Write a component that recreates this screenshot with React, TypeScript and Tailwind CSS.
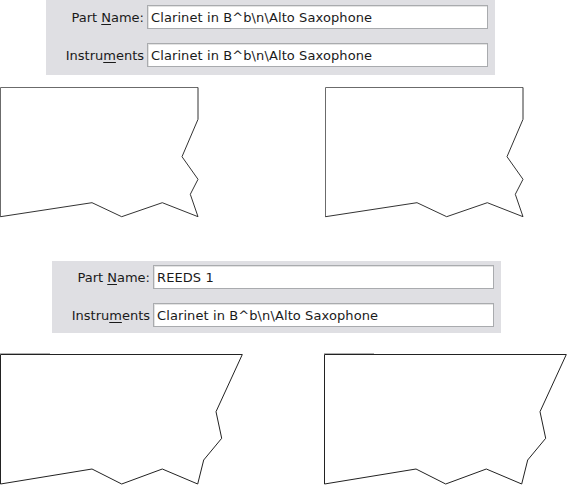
import React from "react";

const font = { fontFamily: '"DejaVu Sans", "Liberation Sans", sans-serif' };

function Field({ label, value }: { label: [string, string, string]; value: string }) {
  return (
    <div className="flex items-center h-[24px]">
      <div className="w-[101px] pr-[3px] text-right text-[13px] leading-none text-[#1a1a1a] whitespace-nowrap">
        {label[0]}
        <span className="underline underline-offset-2">{label[1]}</span>
        {label[2]}
      </div>
      <div className="w-[341px] h-[24px] bg-white border border-[#a9abae] shadow-[inset_1px_1px_0_#e3e3e3] flex items-center pl-[3px] text-[13px] tracking-[0.1px] leading-none text-[#1a1a1a] whitespace-nowrap">
        {value}
      </div>
    </div>
  );
}

function Panel({ className, part }: { className: string; part: string }) {
  return (
    <div className={"bg-[#dfdfe3] w-[449px] flex flex-col " + className}>
      <Field label={["Part ", "N", "ame:"]} value={part} />
      <div className="h-[14px]" />
      <Field label={["Instru", "m", "ents"]} value={"Clarinet in B^b\\n\\Alto Saxophone"} />
    </div>
  );
}

function ShapeA() {
  return (
    <svg width="200" height="132" className="block shrink-0">
      <polyline points="0.5,131 0.5,1.5 198,1.5" fill="none" stroke="#6b6b6b" strokeWidth="1" />
      <polyline
        points="198,1.5 198,33.3 182,70.7 198,93.3 190.3,108.3 198,130.7 162.3,116.7 121.7,130.7 92,116.7 0.5,130.7"
        fill="none"
        stroke="#333"
        strokeWidth="1"
      />
    </svg>
  );
}

function ShapeB() {
  return (
    <svg width="244" height="132" className="block shrink-0">
      <line x1="0" y1="0.5" x2="50" y2="0.5" stroke="#b0b0b0" strokeWidth="1" />
      <polyline
        points="0.5,131 0.5,1.5 242.3,1.5 216,58.7 221.7,85.3 203.7,107 197.7,131 162.3,116 121.7,131 92,116 0.5,131"
        fill="none"
        stroke="#222"
        strokeWidth="1"
      />
    </svg>
  );
}

export default function App() {
  return (
    <div className="w-[568px] h-[485px] bg-white overflow-hidden flex flex-col" style={font}>
      <Panel className="ml-[46px] pt-[5px] h-[75px]" part={"Clarinet in B^b\\n\\Alto Saxophone"} />
      <div className="flex mt-[11px]">
        <ShapeA />
        <div className="w-[125px]" />
        <ShapeA />
      </div>
      <Panel className="ml-[52px] mt-[43px] pt-[4px] h-[72px]" part="REEDS 1" />
      <div className="flex mt-[20px]">
        <ShapeB />
        <div className="w-[81px]" />
        <ShapeB />
      </div>
    </div>
  );
}
